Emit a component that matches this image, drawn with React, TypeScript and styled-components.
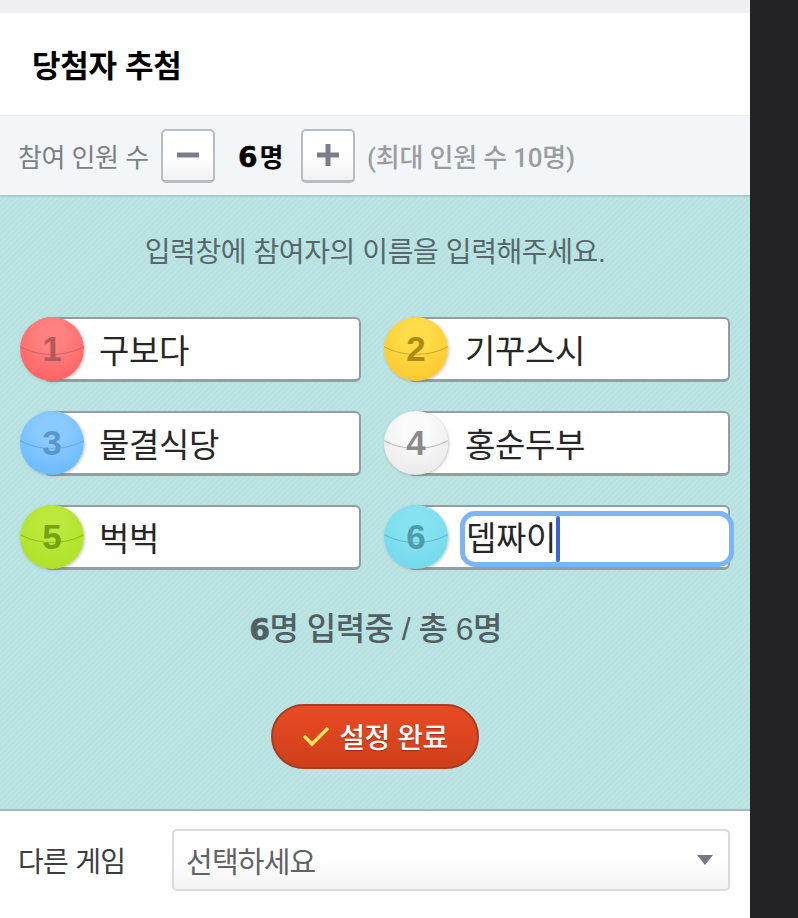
import React from "react";
import styled, { createGlobalStyle } from "styled-components";

const GlobalStyle = createGlobalStyle`
  html, body {
    margin: 0;
    padding: 0;
    background: #232325;
  }
  body {
    font-family: "Liberation Sans", "Noto Sans CJK KR", sans-serif;
  }
`;

const Page = styled.div`
  display: flex;
  width: 798px;
  height: 918px;
  overflow: hidden;
`;

const Main = styled.main`
  width: 750px;
  display: flex;
  flex-direction: column;
  background: #fff;
`;

const TopStrip = styled.div`
  height: 13px;
  background: #f0f0f3;
`;

const Header = styled.header`
  height: 102px;
  display: flex;
  align-items: center;
  padding: 0 0 2px 32px;
  box-sizing: border-box;
  h1 {
    margin: 0;
    font-size: 31px;
    font-weight: 700;
    letter-spacing: -0.3px;
    color: #000;
  }
`;

const CountBar = styled.div`
  height: 82px;
  box-sizing: border-box;
  display: flex;
  align-items: center;
  padding-left: 18px;
  background: #f3f6f8;
  border-top: 1px solid #eceef0;
  border-bottom: 2px solid #a9cccc;
`;

const CountLabel = styled.span`
  font-size: 26px;
  color: #7c7f84;
  letter-spacing: -0.5px;
  width: 143px;
`;

const StepButton = styled.button`
  width: 54px;
  height: 54px;
  padding: 0;
  display: flex;
  align-items: center;
  justify-content: center;
  box-sizing: border-box;
  background: linear-gradient(#ffffff 55%, #f0f1f3);
  border: 2px solid #b9bcc0;
  border-bottom-width: 3px;
  border-radius: 5px;
`;

const CountValue = styled.span`
  width: 86px;
  padding-left: 23px;
  box-sizing: border-box;
  display: flex;
  align-items: baseline;
  gap: 2px;
  font-size: 26px;
  font-weight: 700;
  color: #000;
  b {
    font-family: "DejaVu Sans", sans-serif;
    font-size: 28px;
    font-weight: 700;
    -webkit-text-stroke: 0.5px #000;
  }
`;

const CountHint = styled.span`
  margin-left: 12px;
  font-family: Roboto, "Noto Sans CJK KR", sans-serif;
  font-size: 26px;
  font-weight: 500;
  color: #9a9da1;
  letter-spacing: -0.2px;
  white-space: nowrap;
`;

const Panel = styled.section`
  height: 614px;
  box-sizing: border-box;
  padding-top: 36px;
  display: flex;
  flex-direction: column;
  align-items: center;
  background-color: #b9e3e2;
  background-image: repeating-linear-gradient(
    135deg,
    rgba(255, 255, 255, 0.035) 0 2px,
    rgba(120, 180, 180, 0.03) 2px 4px
  );
  border-bottom: 2px solid #9dbcbb;
`;

const Guide = styled.p`
  margin: 0;
  font-size: 28px;
  line-height: 40px;
  color: #56686c;
  letter-spacing: -0.4px;
  white-space: nowrap;
`;

const Players = styled.div`
  margin-top: 44px;
  align-self: flex-start;
  margin-left: 20px;
  display: grid;
  grid-template-columns: 341px 346px;
  column-gap: 23px;
  row-gap: 29px;
`;

const Player = styled.div`
  position: relative;
  height: 65px;
  margin-left: 24px;
  box-sizing: border-box;
  display: flex;
  align-items: center;
  padding: 5px 0 0 53px;
  background: #fff;
  border: 2px solid #929f9f;
  border-bottom-width: 3px;
  border-radius: 6px;
  &:nth-child(even) {
    padding-left: 55px;
  }
`;

const Ball = styled.span<{ $color: string; $dark: string; $ink: string }>`
  position: absolute;
  left: -26px;
  top: -2px;
  width: 64px;
  height: 64px;
  border-radius: 50%;
  display: flex;
  align-items: center;
  justify-content: center;
  overflow: hidden;
  isolation: isolate;
  font-size: 35px;
  font-weight: 700;
  color: ${(p) => p.$ink};
  background: radial-gradient(circle at 50% 30%, ${(p) => p.$color} 0, ${(p) => p.$color} 25%, ${(p) => p.$dark} 100%);
  box-shadow: 1px 1px 3px rgba(90, 90, 90, 0.35);
  &::after {
    content: "";
    position: absolute;
    z-index: -1;
    left: -10px;
    right: -10px;
    top: -8px;
    height: 46px;
    box-sizing: border-box;
    border: 1px solid ${(p) => p.$ink};
    border-radius: 50%;
    opacity: 0.55;
  }
`;

const Name = styled.span`
  font-size: 33px;
  line-height: 44px;
  color: #262626;
  letter-spacing: -0.4px;
  white-space: nowrap;
`;

const FocusRing = styled.div`
  position: absolute;
  left: 50px;
  right: -6px;
  top: 4px;
  height: 56px;
  box-sizing: border-box;
  padding-left: 1px;
  display: flex;
  align-items: center;
  border: 5px solid #7cb5f5;
  border-radius: 15px;
  background: #fff;
`;

const Caret = styled.span`
  width: 4px;
  height: 46px;
  background: #3a62e0;
  border-radius: 2px;
`;

const Status = styled.p`
  margin: 37px 0 0 1px;
  font-size: 32px;
  line-height: 44px;
  font-weight: 500;
  color: #515f63;
  letter-spacing: -0.55px;
  b {
    font-family: "DejaVu Sans", sans-serif;
    font-size: 30px;
    font-weight: 700;
    -webkit-text-stroke: 0.5px #515f63;
  }
`;

const Confirm = styled.button`
  margin-top: 52px;
  width: 208px;
  height: 65px;
  padding: 0 0 2px;
  display: flex;
  align-items: center;
  justify-content: center;
  gap: 9px;
  box-sizing: border-box;
  font-family: inherit;
  font-size: 28px;
  font-weight: 500;
  letter-spacing: -0.5px;
  color: #fff;
  text-shadow: 0 1px 1px rgba(120, 30, 10, 0.6);
  background: linear-gradient(#e84b24, #cf3f1c);
  border: 2px solid #ab3b20;
  border-radius: 33px;
`;

const Footer = styled.footer`
  flex: 1;
  display: flex;
  align-items: center;
  padding: 0 20px 9px 18px;
  background: #fff;
`;

const FooterLabel = styled.span`
  width: 154px;
  font-size: 28px;
  color: #3d3d40;
  letter-spacing: -0.7px;
`;

const Select = styled.div`
  flex: 1;
  height: 62px;
  box-sizing: border-box;
  display: flex;
  align-items: center;
  justify-content: space-between;
  padding: 0 15px 0 12px;
  font-size: 29px;
  letter-spacing: -0.8px;
  color: #626266;
  background: linear-gradient(#ffffff 50%, #f3f3f3);
  border: 2px solid #dcdcdc;
  border-radius: 5px;
`;

const Arrow = styled.span`
  width: 0;
  height: 0;
  border-left: 8px solid transparent;
  border-right: 8px solid transparent;
  border-top: 10px solid #74798a;
`;

const Sidebar = styled.aside`
  flex: 1;
  background: #232325;
`;

const players = [
  { no: 1, name: "구보다", color: "#ff8080", dark: "#ff5a5a", ink: "#b25a5e" },
  { no: 2, name: "기꾸스시", color: "#ffdc48", dark: "#fcc226", ink: "#b08a10" },
  { no: 3, name: "물결식당", color: "#8acbff", dark: "#62b4ff", ink: "#5a96cc" },
  { no: 4, name: "홍순두부", color: "#fbfbfb", dark: "#e4e4e4", ink: "#8a8a8a" },
  { no: 5, name: "벅벅", color: "#bbe83a", dark: "#aae025", ink: "#74a212" },
  { no: 6, name: "뎁짜이", color: "#86e2f0", dark: "#6dd6ea", ink: "#4f9cad" },
];

function App() {
  return (
    <Page>
      <GlobalStyle />
      <Main>
        <TopStrip />
        <Header>
          <h1>당첨자 추첨</h1>
        </Header>
        <CountBar>
          <CountLabel>참여 인원 수</CountLabel>
          <StepButton aria-label="빼기">
            <svg width="22" height="22" viewBox="0 0 22 22">
              <rect x="0" y="8.5" width="22" height="5" fill="#7a7d8b" />
            </svg>
          </StepButton>
          <CountValue>
            <b>6</b>명
          </CountValue>
          <StepButton aria-label="더하기">
            <svg width="22" height="22" viewBox="0 0 22 22">
              <rect x="0" y="8.5" width="22" height="5" fill="#7a7d8b" />
              <rect x="8.5" y="0" width="5" height="22" fill="#7a7d8b" />
            </svg>
          </StepButton>
          <CountHint>(최대 인원 수 10명)</CountHint>
        </CountBar>
        <Panel>
          <Guide>입력창에 참여자의 이름을 입력해주세요.</Guide>
          <Players>
            {players.map((p) => (
              <Player key={p.no}>
                <Ball $color={p.color} $dark={p.dark} $ink={p.ink}>
                  {p.no}
                </Ball>
                {p.no === 6 ? (
                  <FocusRing>
                    <Name>{p.name}</Name>
                    <Caret />
                  </FocusRing>
                ) : (
                  <Name>{p.name}</Name>
                )}
              </Player>
            ))}
          </Players>
          <Status>
            <b>6</b>명 입력중 / 총 6명
          </Status>
          <Confirm>
            <svg width="28" height="22" viewBox="0 0 28 22">
              <path d="M2 11 L10 19 L26 3" fill="none" stroke="#ffe45c" strokeWidth="3.5" />
            </svg>
            설정 완료
          </Confirm>
        </Panel>
        <Footer>
          <FooterLabel>다른 게임</FooterLabel>
          <Select>
            선택하세요
            <Arrow />
          </Select>
        </Footer>
      </Main>
      <Sidebar />
    </Page>
  );
}

export default App;
